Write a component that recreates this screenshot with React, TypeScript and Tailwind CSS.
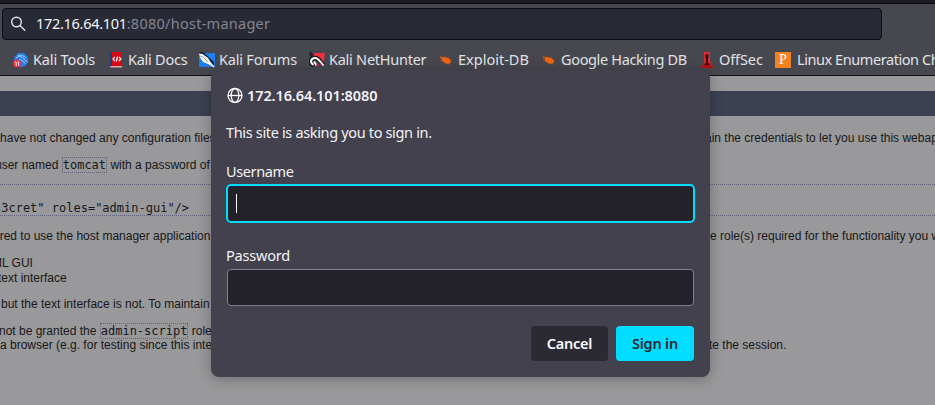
import type { ReactNode } from "react";

function KaliIcon() {
  return (
    <svg width="16" height="16" viewBox="0 0 16 16">
      <circle cx="8" cy="8" r="7.2" fill="#267df0" />
      <path d="M3 6C6 3.5 9 4.5 11 7c1 1.6 2 2 3.5 2.6M5 3.5c3.5-.6 6 .3 8 2.6M6 8c2.4-.6 4 .6 6 3.5" fill="none" stroke="#a9cdfa" strokeWidth="1" />
      <circle cx="4" cy="11.6" r="4" fill="#e92b37" />
      <path d="M1.8 10h1.4v4M4.3 10h1.4v4" fill="none" stroke="#fff" strokeWidth="0.9" />
    </svg>
  );
}

function DocsIcon() {
  return (
    <svg width="16" height="16" viewBox="0 0 16 16">
      <path d="M2 0h2.4v15H2z" fill="#183f79" />
      <path d="M4 0h10v14H4z" fill="#d90713" />
      <path d="M2.3 14H14v1.5H2.3z" fill="#dca9ad" />
      <path d="M6.9 5 5 7l1.9 2M11 5l1.9 2L11 9M9.5 4.5l-1.1 5" fill="none" stroke="#fff" strokeWidth="1.2" />
    </svg>
  );
}

function ForumsIcon() {
  return (
    <svg width="16" height="16" viewBox="0 0 16 16">
      <path d="M0 1h16v14H0z" fill="#1b7df3" />
      <path d="M0 0h4l11 10v5h-2L1 5z" fill="#1c2537" />
      <path d="M0 1.5 3.5 2 9 6l2.5 4 4 4.5-1 1L9 12l-5-2-3-4.5z" fill="#f4f5f6" />
      <path d="m4 5 5 5M1 4l3 1" stroke="#89909b" strokeWidth="0.8" />
    </svg>
  );
}

function NetHunterIcon() {
  return (
    <svg width="16" height="16" viewBox="0 0 16 16">
      <path d="M5 1h11l-1 8-2 3-3-5-5-2z" fill="#f0303e" />
      <path d="M0 0h2l3 3-4 2z" fill="#25242a" />
      <path d="M5.5 13C.5 12 1 6.5 5.5 6S10 9 14.5 13.5" fill="none" stroke="#191a20" strokeWidth="4.6" />
      <path d="M4.5 12.8C.8 11 1.5 6.6 5.5 6S10 9 14.5 13.5M5 9.5l2.5 4" fill="none" stroke="#fff" strokeWidth="2" />
      <path d="m8 10.5 2.3 2.5-3.3.8" fill="#d61d4a" />
      <path d="m11 11 2 3.5" stroke="#d61d4a" strokeWidth="1.2" />
    </svg>
  );
}

function BugIcon() {
  return (
    <svg width="16" height="16" viewBox="0 0 16 16">
      <path d="m2 5 12 5M1.5 9.5 14 7.5M5 2l2 10M11 4l-3 8.5M9 12l4 .8" stroke="#8c4930" strokeWidth="0.8" />
      <ellipse cx="8.2" cy="8.4" rx="5" ry="2.8" transform="rotate(24 8.2 8.4)" fill="#f0650d" />
      <path d="m1.5 3.5 3.5 2-2.5 1.5" fill="#b9541f" />
    </svg>
  );
}

function OffSecIcon() {
  return (
    <svg width="16" height="16" viewBox="0 0 16 16">
      <path d="M5 0h6v9l3.6 7H2l3-6z" fill="#e02a30" />
      <path d="M2 16l3-5 3 2 3-2 3.6 5z" fill="#b5121a" />
      <path d="M8 2c2 0 2 3 .9 5l.2 4 1.5 1.5-1.8.2L8 14l-.8-1.3-1.8-.2L6.9 11l.2-4C6 5 6 2 8 2z" fill="#351012" />
    </svg>
  );
}

function PentestIcon() {
  return (
    <span className="flex size-4 items-center justify-center bg-[#f58220] font-['Liberation_Serif',serif] text-[14px] leading-4 text-white">P</span>
  );
}

function Bookmark({ icon, label, size, tracking }: { icon: ReactNode; label: string; size: string; tracking: string }) {
  return (
    <div className={`flex shrink-0 items-center gap-1 whitespace-nowrap ${size}`}>
      <span className="size-4 shrink-0">{icon}</span>
      <span className={tracking}>{label}</span>
    </div>
  );
}

function Toolbar() {
  return (
    <header className="h-[76px] overflow-hidden border-b border-[#0c0c12] bg-[#46474f] font-['Noto_Sans',sans-serif] text-[#e3e3e6]">
      <div className="h-1 border-b border-[#0c0c12] bg-[#1c1b22]" />
      <div className="ml-0.5 mt-1 flex h-8 w-[880px] items-center rounded border border-[#0c0c12] bg-[#282a36] pl-[7px]">
        <svg width="18" height="18" viewBox="0 0 18 18" fill="none" stroke="#e5e5e8" strokeWidth="1.4" strokeLinecap="round">
          <circle cx="6.5" cy="7" r="4.8" />
          <path d="m10 10.5 4.7 4.7" />
        </svg>
        <span className="ml-2 whitespace-nowrap text-[14.5px] tracking-[-0.3px] text-[#f4f4f6]">
          172.16.64.101<span className="tracking-[0.26px] text-[#858692]">:8080/host-manager</span>
        </span>
      </div>
      <nav className="mt-[9px] flex h-[22px] items-center pl-[13px] text-[14.5px]">
        <Bookmark icon={<KaliIcon />} label="Kali Tools" size="w-[95px]" tracking="tracking-[-0.15px]" />
        <Bookmark icon={<DocsIcon />} label="Kali Docs" size="w-[91px]" tracking="tracking-[-0.25px]" />
        <Bookmark icon={<ForumsIcon />} label="Kali Forums" size="w-[110px]" tracking="tracking-[-0.2px]" />
        <Bookmark icon={<NetHunterIcon />} label="Kali NetHunter" size="w-[129px]" tracking="tracking-[-0.25px]" />
        <Bookmark icon={<BugIcon />} label="Exploit-DB" size="w-[103px]" tracking="tracking-[0px]" />
        <Bookmark icon={<BugIcon />} label="Google Hacking DB" size="w-[158px]" tracking="tracking-[-0.35px]" />
        <Bookmark icon={<OffSecIcon />} label="OffSec" size="w-[76px]" tracking="tracking-[-0.1px]" />
        <div className="flex shrink-0 items-center gap-1.5 whitespace-nowrap">
          <PentestIcon />
          <span className="tracking-[-0.43px]">Linux Enumeration Ch</span>
        </div>
      </nav>
    </header>
  );
}

function Code({ children }: { children: ReactNode }) {
  return <code className="border border-dotted border-[#61617e] font-['DejaVu_Sans_Mono',monospace] text-[12px]">{children}</code>;
}

function Page() {
  return (
    <main className="h-[329px] overflow-hidden whitespace-nowrap bg-[#99999b] pt-[15px] font-['Liberation_Sans',sans-serif] text-[12px] leading-[14px] text-[#171719]">
      <div className="h-[25px] bg-[#3b4151]" />
      <div className="mt-[15px] flex h-[14px]">
        <span className="w-[710px] shrink-0 tracking-[0.02px]">have not changed any configuration files,</span>
        <span className="-ml-[5px]">ain the credentials to let you use this webapp.</span>
      </div>
      <p className="-ml-[5px] mt-[13px] h-[14px]">user named <Code>tomcat</Code> with a password of</p>
      <pre className="mt-3 h-8 border-y border-dotted border-[#61617e] pt-[16px] font-['DejaVu_Sans_Mono',monospace] text-[12px] leading-[14px]">
        <span className="-ml-[6px]">s3cret" roles="admin-gui"/&gt;</span>
      </pre>
      <div className="mt-[13px] flex h-[14px]">
        <span className="w-[710px] shrink-0 -indent-[3px]">ired to use the host manager application</span>
        <span>e role(s) required for the functionality you wish</span>
      </div>
      <ul className="mt-[13px] h-[29px] leading-[15px]">
        <li className="-ml-[8px]">ML GUI</li>
        <li className="-ml-[2px]">text interface</li>
      </ul>
      <p className="ml-px mt-3 h-[14px]">but the text interface is not. To maintain</p>
      <p className="mt-[13px] h-[14px] -indent-px">not be granted the <Code>admin-script</Code> role</p>
      <div className="flex h-[14px]">
        <span className="w-[709px] shrink-0">a browser (e.g. for testing since this interface</span>
        <span>te the session.</span>
      </div>
    </main>
  );
}

function SignIn() {
  return (
    <section className="absolute left-[211px] top-[70px] h-[307px] w-[499px] rounded-lg bg-[#42414d] px-4 pt-[15px] font-['Noto_Sans',sans-serif] text-[14.5px] leading-5 text-[#f3f3f6] shadow-[0_2px_14px_rgba(0,0,0,0.28)]">
      <div className="flex h-5 items-center gap-1">
        <svg width="16" height="16" viewBox="0 0 16 16" fill="none" stroke="#fbfbfe" strokeWidth="1.3">
          <circle cx="8" cy="8.5" r="7" />
          <ellipse cx="8" cy="8.5" rx="3.8" ry="7" />
          <path d="M1 8.5h14" />
        </svg>
        <strong className="font-semibold tracking-[-0.1px]">172.16.64.101:8080</strong>
      </div>
      <p className="mt-[17px] -indent-px tracking-[-0.34px]">This site is asking you to sign in.</p>
      <label className="mt-[19px] block -indent-px tracking-[-0.38px]">Username</label>
      <div className="-mx-px mt-[3px] flex h-[39px] items-center rounded-[5px] border-2 border-[#00ddff] bg-[#23222b] pl-2">
        <span className="h-[19px] w-px bg-[#fbfbfe]" />
      </div>
      <label className="mt-[22px] block -indent-px tracking-[-0.2px]">Password</label>
      <div className="mt-[4px] h-[37px] rounded border border-[#83828b] bg-[#23222b]" />
      <div className="mt-5 flex justify-end gap-2 font-semibold">
        <button className="h-[35px] w-[77px] rounded bg-[#2b2a33] pb-0.5 tracking-[-0.25px] text-[#fbfbfe]">Cancel</button>
        <button className="h-[35px] w-[78px] rounded bg-[#00ddff] pb-0.5 tracking-[-0.2px] text-[#2b2a33]">Sign in</button>
      </div>
    </section>
  );
}

export default function App() {
  return (
    <div className="relative h-[405px] w-[935px] overflow-hidden">
      <Toolbar />
      <Page />
      <SignIn />
    </div>
  );
}
